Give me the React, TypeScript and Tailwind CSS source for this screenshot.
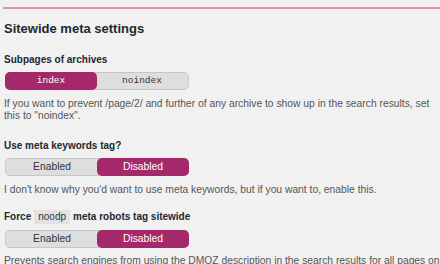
import React, { useState } from 'react'

type Opt = { label: string; mono?: boolean }

function Toggle({ options, value, onChange }: { options: Opt[]; value: number; onChange: (i: number) => void }) {
  return (
    <div className="ml-[1px] flex h-[18px] w-[184px] rounded-[5px] border border-[#c6c6c6] bg-[#dedede]">
      {options.map((o, i) => (
        <button
          key={o.label}
          onClick={() => onChange(i)}
          className={
            'flex-1 rounded-[5px] leading-[16px] ' +
            (o.mono ? "font-['Liberation_Mono',monospace] text-[9.5px] " : 'text-[10.3px] ') +
            (i === value ? 'bg-[#a4286a] text-white -m-[1px] h-[18px]' : 'text-[#333]')
          }
        >
          {o.label}
        </button>
      ))}
    </div>
  )
}

export default function App() {
  const [archives, setArchives] = useState(0)
  const [keywords, setKeywords] = useState(1)
  const [noodp, setNoodp] = useState(1)

  return (
    <div className="h-[264px] overflow-hidden bg-[#f1f1f1] font-['Liberation_Sans',Arial,sans-serif] text-[#555]">
      <div className="pl-[3px] pt-[7px]">
        <div className="h-[2px] border-t border-[#b8aab4] bg-[#dc8fae]" />
      </div>

      <div className="px-[4px]">
        <h2 className="mt-[12px] text-[13px] font-bold leading-[16px] text-[#23282d]">Sitewide meta settings</h2>

        {/* archives */}
        <p className="mt-[17px] text-[10px] font-bold leading-[12px] text-[#23282d]">Subpages of archives</p>
        <div className="mt-[6px]">
          <Toggle options={[{ label: 'index', mono: true }, { label: 'noindex', mono: true }]} value={archives} onChange={setArchives} />
        </div>
        <p className="mt-[8px] w-[432px] text-[10.3px] leading-[12px]">
          If you want to prevent /page/2/ and further of any archive to show up in the search results, set this to "noindex".
        </p>

        {/* keywords */}
        <p className="mt-[18px] text-[10px] font-bold leading-[12px] text-[#23282d]">Use meta keywords tag?</p>
        <div className="mt-[6px]">
          <Toggle options={[{ label: 'Enabled' }, { label: 'Disabled' }]} value={keywords} onChange={setKeywords} />
        </div>
        <p className="mt-[8px] text-[10.3px] leading-[12px]">
          I don't know why you'd want to use meta keywords, but if you want to, enable this.
        </p>

        {/* noodp */}
        <p className="mt-[14px] flex items-center text-[10px] font-bold leading-[14px] text-[#23282d]">
          Force
          <span className="mx-[3px] bg-[#e2e2e2] px-[4px] font-normal text-[#333]">noodp</span>
          meta robots tag sitewide
        </p>
        <div className="mt-[6px]">
          <Toggle options={[{ label: 'Enabled' }, { label: 'Disabled' }]} value={noodp} onChange={setNoodp} />
        </div>
        <p className="mt-[7px] w-[440px] text-[10.3px] leading-[12px]">
          Prevents search engines from using the DMOZ description in the search results for all pages on this site. Note: If you set a custom description for a page or post, it will have the noodp tag regardless of this setting.
        </p>
      </div>
    </div>
  )
}
